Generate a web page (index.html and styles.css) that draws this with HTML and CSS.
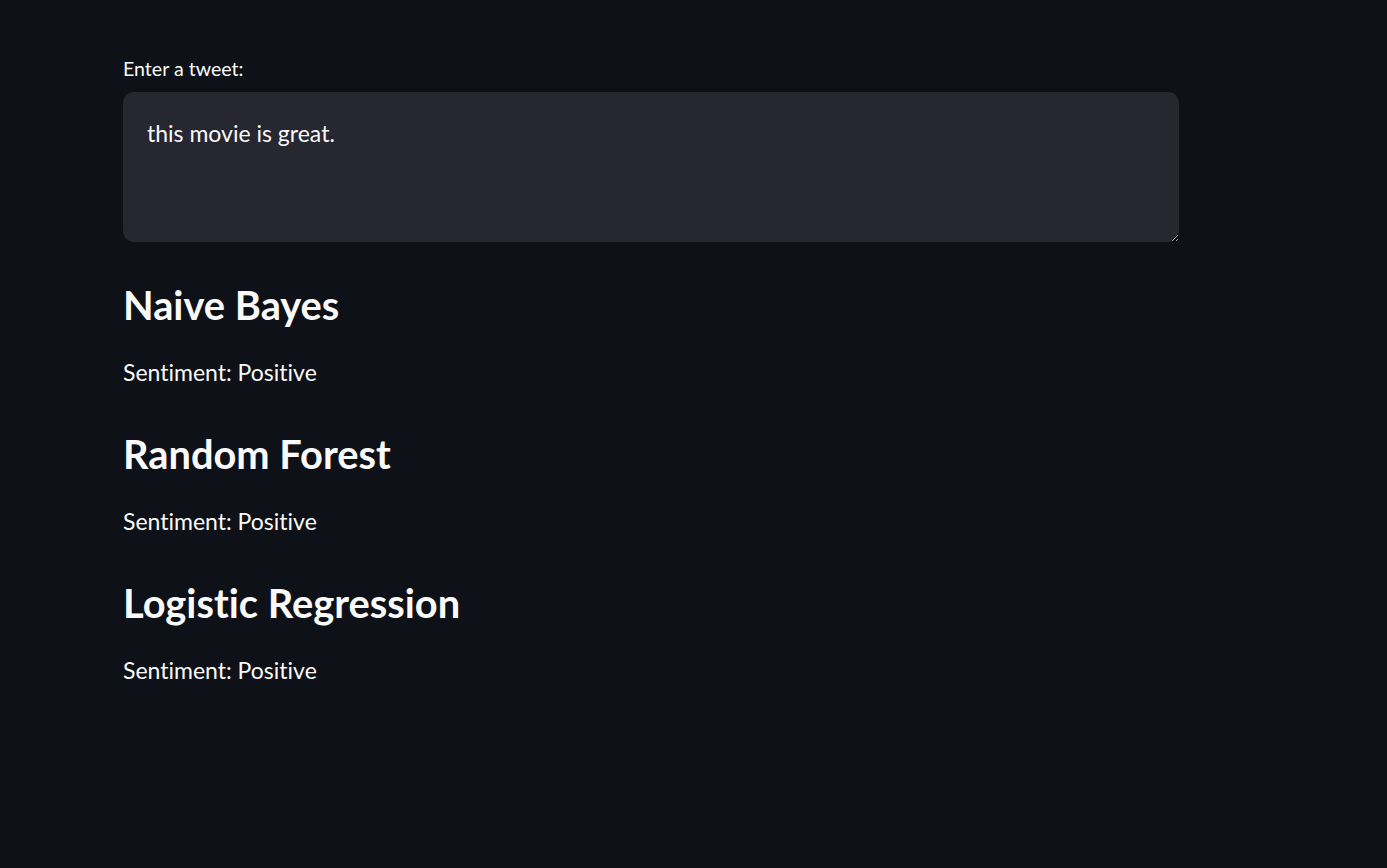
FILE: index.html
```html
<!DOCTYPE html>
<html lang="en">
<head>
<meta charset="utf-8">
<title>Tweet Sentiment</title>
<link rel="stylesheet" href="styles.css">
</head>
<body>
<main class="app">
  <label class="field-label" for="tweet">Enter a tweet:</label>
  <textarea id="tweet" class="tweet-input">this movie is great.</textarea>
  <section class="result">
    <h3 class="model-title">Naive Bayes</h3>
    <p class="sentiment">Sentiment: Positive</p>
  </section>
  <section class="result">
    <h3 class="model-title">Random Forest</h3>
    <p class="sentiment">Sentiment: Positive</p>
  </section>
  <section class="result">
    <h3 class="model-title">Logistic Regression</h3>
    <p class="sentiment">Sentiment: Positive</p>
  </section>
</main>
</body>
</html>
```
FILE: styles.css
```css
html, body {
  margin: 0;
  padding: 0;
  background: #0e1117;
  height: 100%;
}
body {
  font-family: Lato, "Noto Sans", sans-serif;
  font-variant-ligatures: none;
  color: #fafafa;
}
.app {
  display: flex;
  flex-direction: column;
  width: 1056px;
  padding: 56px 0 0 123px;
}
.field-label {
  font-size: 19.6px;
  line-height: 25px;
  margin-bottom: 11px;
}
.tweet-input {
  box-sizing: border-box;
  width: 1056px;
  height: 150px;
  margin: 0 0 38px 0;
  padding: 24px 24px 22px;
  background: #262730;
  color: #fafafa;
  border: none;
  border-radius: 11px;
  font-family: inherit;
  font-variant-ligatures: none;
  font-size: 23px;
  line-height: 35px;
  resize: vertical;
  outline: none;
}
.result {
  display: flex;
  flex-direction: column;
  padding-bottom: 39px;
}
.model-title {
  margin: 0 0 27px 0;
  padding-top: 1px;
  font-size: 39.8px;
  line-height: 47px;
  font-weight: 700;
}
.sentiment {
  margin: 0;
  font-size: 23px;
  line-height: 35px;
}
```
